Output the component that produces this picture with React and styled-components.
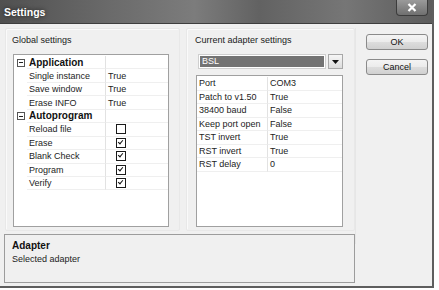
import React from "react";
import styled, { createGlobalStyle } from "styled-components";

const GlobalStyle = createGlobalStyle`
  body {
    margin: 0;
    background: #ffffff;
    font-family: "Liberation Sans", Arial, sans-serif;
  }
`;

const globalProps = [
  { category: "Application" },
  { name: "Single instance", value: "True" },
  { name: "Save window", value: "True" },
  { name: "Erase INFO", value: "True" },
  { category: "Autoprogram" },
  { name: "Reload file", check: false },
  { name: "Erase", check: true },
  { name: "Blank Check", check: true },
  { name: "Program", check: true },
  { name: "Verify", check: true },
];

const adapterProps = [
  ["Port", "COM3"],
  ["Patch to v1.50", "True"],
  ["38400 baud", "False"],
  ["Keep port open", "False"],
  ["TST invert", "True"],
  ["RST invert", "True"],
  ["RST delay", "0"],
];

export default function App() {
  return (
    <>
      <GlobalStyle />
      <Window>
        <TitleBar>
          <Title>Settings</Title>
          <CloseButton>
            <svg width="10" height="9" viewBox="0 0 10 9">
              <path d="M1.5 1 L8.5 8 M8.5 1 L1.5 8" stroke="#fff" strokeWidth="2.2" />
            </svg>
          </CloseButton>
        </TitleBar>
        <Body>
          <Main>
            <Groups>
              <Group $width={175} $pad="4px 10px 3px 7px">
                <GroupLabel>Global settings</GroupLabel>
                <Grid $top={0}>
                  {globalProps.map((p, i) =>
                    p.category ? (
                      <GlobalRow key={i}>
                        <Margin>
                          <Toggle />
                        </Margin>
                        <CategoryName>{p.category}</CategoryName>
                        <Cell $line />
                      </GlobalRow>
                    ) : (
                      <GlobalRow key={i}>
                        <Margin />
                        <Cell>{p.name}</Cell>
                        <Cell $line>
                          {p.value !== undefined ? p.value : <CheckBox $on={p.check} />}
                        </Cell>
                      </GlobalRow>
                    )
                  )}
                </Grid>
              </Group>
              <Group $width={169} $pad="4px 11px 3px 9px">
                <GroupLabel>Current adapter settings</GroupLabel>
                <Combo>
                  <ComboValue>BSL</ComboValue>
                  <DropButton>
                    <svg width="7" height="4" viewBox="0 0 7 4">
                      <path d="M0 0 H7 L3.5 4 Z" fill="#111" />
                    </svg>
                  </DropButton>
                </Combo>
                <Grid $top={6}>
                  {adapterProps.map(([name, value]) => (
                    <AdapterRow key={name}>
                      <Cell>{name}</Cell>
                      <Cell $line>{value}</Cell>
                    </AdapterRow>
                  ))}
                </Grid>
              </Group>
            </Groups>
            <Description>
              <DescTitle>Adapter</DescTitle>
              <DescText>Selected adapter</DescText>
            </Description>
          </Main>
          <Buttons>
            <Button>OK</Button>
            <Button>Cancel</Button>
          </Buttons>
        </Body>
      </Window>
    </>
  );
}

const Window = styled.div`
  width: 432px;
  height: 286px;
  background: #f0f0f0;
  border-right: 2px solid #5e5e5e;
  border-bottom: 2px solid #5e5e5e;
  display: flex;
  flex-direction: column;
`;

const TitleBar = styled.div`
  height: 23px;
  flex-shrink: 0;
  display: flex;
  align-items: flex-start;
  justify-content: space-between;
  background: linear-gradient(
    to right,
    #505050 0%,
    #6a6a6a 25%,
    #7c7c7c 45%,
    #626262 60%,
    #767676 80%,
    #5c5c5c 100%
  );
  border-bottom: 1px solid #3e3e3e;
`;

const Title = styled.span`
  color: #fff;
  font-size: 10.5px;
  font-weight: bold;
  padding: 6px 0 0 4px;
  text-shadow: 0 0 4px rgba(0, 0, 0, 0.7);
`;

const CloseButton = styled.div`
  width: 30px;
  height: 15px;
  margin-right: 4px;
  display: flex;
  align-items: center;
  justify-content: center;
  background: linear-gradient(#9a9a9a, #707070);
  border: 1px solid #3c3c3c;
  border-top: none;
  border-radius: 0 0 4px 4px;
`;

const Body = styled.div`
  flex: 1;
  display: flex;
  padding: 4px 0 0 4px;
`;

const Main = styled.div`
  width: 351px;
  display: flex;
  flex-direction: column;
`;

const Groups = styled.div`
  display: flex;
  gap: 6px;
  height: 203px;
  padding-left: 1px;
`;

const Group = styled.div`
  width: ${(p) => p.$width}px;
  box-sizing: border-box;
  display: flex;
  flex-direction: column;
  padding: ${(p) => p.$pad};
  border: 1px solid #e8e8e8;
  border-radius: 2px;
  box-shadow: inset 1px 1px 0 #fafafa;
`;

const GroupLabel = styled.div`
  font-size: 9px;
  color: #1a1a1a;
  height: 14px;
  line-height: 14px;
  margin: 0 0 7px -1px;
`;

const Combo = styled.div`
  display: flex;
  gap: 2px;
  height: 15px;
  margin-left: 2px;
`;

const ComboValue = styled.div`
  flex: 1;
  background: #737373;
  border: 1px solid #cfcfcf;
  box-shadow: inset 0 0 0 1px #fff;
  color: #fff;
  font-size: 9px;
  line-height: 13px;
  padding-left: 3px;
`;

const DropButton = styled.div`
  width: 13px;
  display: flex;
  align-items: center;
  justify-content: center;
  background: linear-gradient(#f6f6f6, #dcdcdc);
  border: 1px solid #a8a8a8;
`;

const Grid = styled.div`
  flex: 1;
  margin-top: ${(p) => p.$top}px;
  background: #fff;
  border: 1px solid #a0a0a0;
  padding-top: 1px;
`;

const GlobalRow = styled.div`
  display: grid;
  grid-template-columns: 13px 78px 1fr;
  height: 13.45px;
`;

const AdapterRow = styled.div`
  display: grid;
  grid-template-columns: 70px 1fr;
  height: 13.5px;
`;

const Cell = styled.div`
  display: flex;
  align-items: center;
  font-size: 9px;
  color: #1c1c1c;
  padding-left: 2px;
  border-bottom: 1px solid #efefef;
  border-left: ${(p) => (p.$line ? "1px solid #e2e2e2" : "none")};
  box-sizing: border-box;
  white-space: nowrap;
`;

const CategoryName = styled(Cell)`
  font-size: 10px;
  font-weight: bold;
  color: #111;
`;

const Margin = styled.div`
  display: flex;
  align-items: center;
  padding-left: 3px;
`;

const Toggle = styled.div`
  width: 8px;
  height: 8px;
  box-sizing: border-box;
  border: 1px solid #555;
  position: relative;
  &::after {
    content: "";
    position: absolute;
    left: 1px;
    right: 1px;
    top: 2.5px;
    height: 1px;
    background: #222;
  }
`;

const CheckBox = styled.div`
  width: 10px;
  height: 10px;
  box-sizing: border-box;
  margin-left: 8px;
  border: 1.5px solid #1a1a1a;
  background: #fff;
  position: relative;
  &::after {
    content: "";
    display: ${(p) => (p.$on ? "block" : "none")};
    position: absolute;
    left: 2px;
    top: 0px;
    width: 2px;
    height: 4px;
    border-right: 1.6px solid #111;
    border-bottom: 1.6px solid #111;
    transform: rotate(40deg);
  }
`;

const Description = styled.div`
  margin-top: 3px;
  height: 49px;
  box-sizing: border-box;
  border: 1px solid #9c9c9c;
  padding: 4px 7px;
`;

const DescTitle = styled.div`
  font-size: 10px;
  font-weight: bold;
  color: #111;
  line-height: 13px;
`;

const DescText = styled.div`
  font-size: 9px;
  color: #1c1c1c;
  line-height: 14px;
`;

const Buttons = styled.div`
  display: flex;
  flex-direction: column;
  gap: 9px;
  padding: 6px 0 0 10px;
  border-left: 1px solid #e6e6e6;
  height: 210px;
`;

const Button = styled.div`
  width: 62px;
  height: 16px;
  box-sizing: border-box;
  border: 1px solid #8a8a8a;
  border-radius: 3px;
  background: linear-gradient(#f4f4f4 0%, #ebebeb 50%, #dddddd 51%, #d0d0d0 100%);
  font-size: 9px;
  color: #111;
  display: flex;
  align-items: center;
  justify-content: center;
`;
